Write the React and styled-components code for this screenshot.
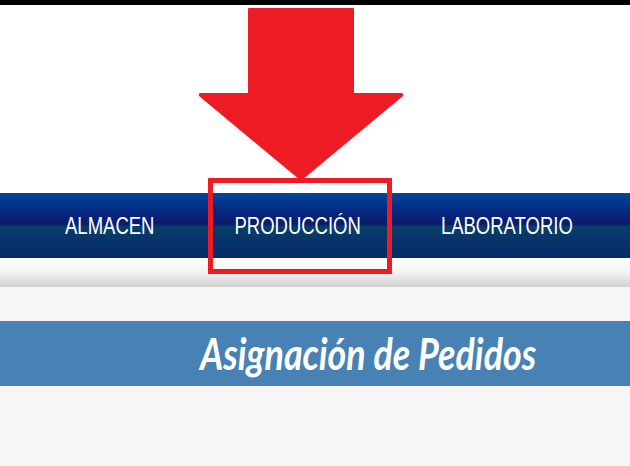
import React from "react";
import styled, { createGlobalStyle } from "styled-components";

const GlobalStyle = createGlobalStyle`
  html, body {
    margin : 0;
    padding : 0;
    background : #f6f6f6;
  }
  body {
    font-family : "Liberation Sans", Arial, sans-serif;
  }
`;

const Page = styled.div`
  position : relative;
  width : 630px;
  height : 466px;
  overflow : hidden;
  background : #f6f6f6;
`;

const TopLine = styled.div`
  height : 5px;
  background : #000000;
`;

const Header = styled.div`
  height : 188px;
  background : #ffffff;
`;

const NavBar = styled.nav`
  height : 65px;
  display : flex;
  align-items : center;
  gap : 80px;
  padding-left : 65px;
  background : linear-gradient(
    to bottom,
    #00499b 0%,
    #062b84 25%,
    #0a1b6d 48%,
    #063e68 52%,
    #07336a 75%,
    #0a2a6a 100%
  );
`;

const NavItem = styled.a`
  display : inline-block;
  color : #ffffff;
  font-size : 18.5px;
  text-decoration : none;
  transform : scaleY(1.3);
  white-space : nowrap;
  margin-top : 1px;
`;

const Shine = styled.div`
  height : 29px;
  background : linear-gradient(to bottom, #ffffff 0%, #f4f4f4 45%, #d2d2d2 100%);
`;

const Content = styled.main`
  padding-top : 34px;
`;

const TitleBanner = styled.div`
  height : 65px;
  display : flex;
  align-items : center;
  padding-left : 200px;
  background : #4882b4;
`;

const Title = styled.h1`
  margin : 0;
  color : #ffffff;
  font-family : Lato, "Open Sans", sans-serif;
  font-style : italic;
  font-weight : bold;
  font-size : 35.8px;
  transform : scaleY(1.25);
  white-space : nowrap;
`;

const Arrow = styled.svg`
  position : absolute;
  left : 198px;
  top : 8px;
`;

const Highlight = styled.div`
  position : absolute;
  left : 208px;
  top : 178px;
  width : 184px;
  height : 96px;
  box-sizing : border-box;
  border : 5px solid #ed1c24;
`;

const items = ["ALMACEN", "PRODUCCIÓN", "LABORATORIO"];

function App() {
  return (
    <Page>
      <GlobalStyle />
      <TopLine />
      <Header />
      <NavBar>
        {items.map((item) => (
          <NavItem key={item} href="#">{item}</NavItem>
        ))}
      </NavBar>
      <Shine />
      <Content>
        <TitleBanner>
          <Title>Asignación de Pedidos</Title>
        </TitleBanner>
      </Content>

      <Arrow width="206" height="173" viewBox="0 0 206 173">
        <path
          d="M51 0 L155 0 Q156 0 156 1 L156 85 L204 85 Q206 86 205 88 L104 172 Q103 173 102 172 L1 88 Q0 86 2 85 L50 85 L50 1 Q50 0 51 0 Z"
          fill="#ed1c24"
        />
      </Arrow>
      <Highlight />
    </Page>
  );
}

export default App;
